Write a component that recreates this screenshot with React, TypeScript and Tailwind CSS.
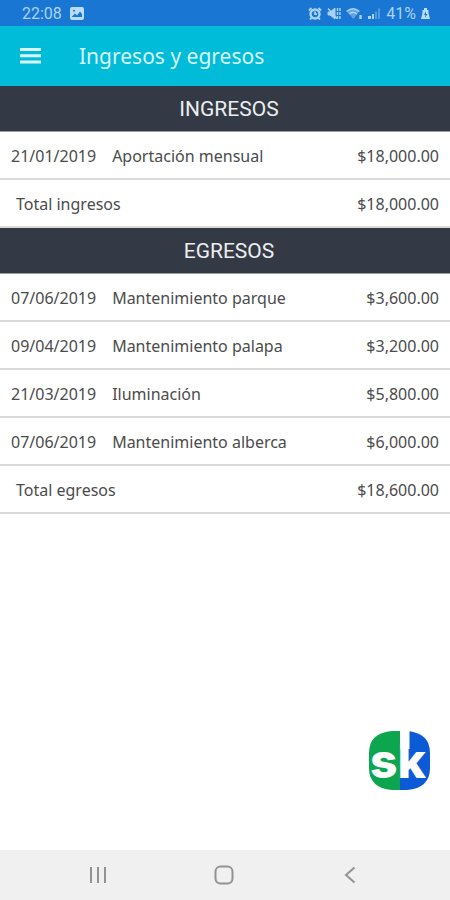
type Entry = {
  date: string;
  concept: string;
  amount: string;
};

type Section = {
  title: string;
  totalLabel: string;
  total: string;
  entries: Entry[];
};

const sections: Section[] = [
  {
    title: "INGRESOS",
    totalLabel: "Total ingresos",
    total: "$18,000.00",
    entries: [
      { date: "21/01/2019", concept: "Aportación mensual", amount: "$18,000.00" },
    ],
  },
  {
    title: "EGRESOS",
    totalLabel: "Total egresos",
    total: "$18,600.00",
    entries: [
      { date: "07/06/2019", concept: "Mantenimiento parque", amount: "$3,600.00" },
      { date: "09/04/2019", concept: "Mantenimiento palapa", amount: "$3,200.00" },
      { date: "21/03/2019", concept: "Iluminación", amount: "$5,800.00" },
      { date: "07/06/2019", concept: "Mantenimiento alberca", amount: "$6,000.00" },
    ],
  },
];

function StatusBar() {
  return (
    <div className="flex h-[26px] items-center justify-between bg-[#1976d2] pl-[22px] pr-5 pt-px font-['Roboto',sans-serif] text-[16px] text-[#a9d2f5]">
      <div className="flex items-center gap-2">
        <span>22:08</span>
        <svg width="14" height="13" viewBox="0 0 14 13">
          <rect width="14" height="13" rx="2" fill="#b9dcf8" />
          <path d="M2 9.500 5 6.500l2 2 3-4 2 2.500V10H2z" fill="#1976d2" />
          <circle cx="4" cy="3.700" r="1" fill="#1976d2" />
        </svg>
      </div>
      <div className="flex items-center gap-[5px]">
        {/* alarm */}
        <svg width="14" height="13" viewBox="0 0 14 13" fill="none" stroke="currentColor">
          <circle cx="7" cy="7" r="4.500" strokeWidth="2.400" />
          <path d="M7 4.500V7.200h2M1 3.500 3.500 1M13 3.500 10.500 1M3.500 11 2 12.500M10.500 11l1.500 1.500" strokeWidth="1.800" />
        </svg>
        {/* vibrate / muted */}
        <svg width="14" height="13" viewBox="0 0 14 13" fill="none" stroke="currentColor">
          <path d="M1 5h2l5-4v11L3 8H1z" fill="currentColor" />
          <path d="M1 1.500 10 11.500" strokeWidth="1.400" />
          <path d="M10.500 1v11M13 1v11" strokeWidth="1.400" strokeDasharray="3 1" />
        </svg>
        <svg width="17" height="13" viewBox="0 0 17 13" fill="none" stroke="currentColor">
          <path d="M1 4.500Q7-1 13 4.500L7.500 12z" fill="currentColor" stroke="none" opacity="0.5" />
          <path d="M.5 4.500Q7-1 13.500 4.500M3 7Q7 3.500 11 7" strokeWidth="1.400" />
          <path d="M14.500 8v4" strokeWidth="2.400" />
        </svg>
        <svg width="13" height="13" viewBox="0 0 13 13" fill="currentColor">
          <path d="M0 9h3v3H0zM4 7h2v5H4z" />
          <path d="M7 4.500h2V12H7zM10 1.500h2V12h-2z" opacity="0.4" />
        </svg>
        <span>41%</span>
        <svg width="9" height="13" viewBox="0 0 9 13">
          <path d="M3 1h3v2h1.500v3L9 12H0l1.500-6V3H3z" fill="#b9dcf8" />
          <path d="M5 4 3 8h1.500L4 11l2.500-4H5z" fill="#1976d2" />
        </svg>
      </div>
    </div>
  );
}

function LedgerSection({ section }: { section: Section }) {
  return (
    <section>
      <h2 className="flex h-[46px] items-center justify-center border-b border-[#9a9da1] bg-[#343a45] pl-2 pt-[3px] font-['Roboto',sans-serif] text-[21px] text-[#eceef0]">
        {section.title}
      </h2>
      <table className="w-full border-separate border-spacing-0 text-[16px] text-[#4b4b4b]">
        <tbody>
          {section.entries.map((entry) => (
            <tr key={entry.date + entry.concept} className="h-12">
              <td className="w-px whitespace-nowrap border-b-2 border-[#dadada] pl-[11px] pr-4 pt-[2px]">{entry.date}</td>
              <td className="border-b-2 border-[#dadada] pt-[2px]">{entry.concept}</td>
              <td className="border-b-2 border-[#dadada] pr-[11px] pt-[2px] text-right">{entry.amount}</td>
            </tr>
          ))}
        </tbody>
        <tfoot>
          <tr className="h-12">
            <td colSpan={2} className="border-b-2 border-[#dadada] pl-4 pt-[2px]">
              {section.totalLabel}
            </td>
            <td className="border-b-2 border-[#dadada] pr-[11px] pt-[2px] text-right">{section.total}</td>
          </tr>
        </tfoot>
      </table>
    </section>
  );
}

export default function App() {
  return (
    <div className="relative flex min-h-screen flex-col bg-white font-['Noto_Sans',sans-serif]">
      <StatusBar />

      <header className="flex h-[60px] items-center gap-[38px] bg-[#00bcd8] px-5 text-[#d9f7fb]">
        <button type="button" aria-label="Menú">
          <svg width="21" height="16" viewBox="0 0 21 16" fill="currentColor">
            <path d="M0 0h21v3H0zM0 6.200h21v3H0zM0 12.400h21v3H0z" />
          </svg>
        </button>
        <h1 className="pt-[2px] text-[21px]">Ingresos y egresos</h1>
      </header>

      <main className="flex-1">
        {sections.map((section) => (
          <LedgerSection key={section.title} section={section} />
        ))}
      </main>

      <button type="button" aria-label="Abrir sk" className="absolute bottom-[100px] right-5">
        <svg width="61" height="79" viewBox="0 -10 61 79">
          <path d="M31 0H23Q0 2 0 22v15q0 20 23 22h8z" fill="#0da64f" />
          <path d="M31 0h7q23 2 23 22v15q0 20-23 22h-7z" fill="#0b5bd7" />
          <text x="1" y="47" fill="#fff" className="font-['Inter',sans-serif] text-[48px] font-extrabold">
            sk
          </text>
          <path d="M31 0h9.500v18H31z" fill="#fff" />
        </svg>
      </button>

      <nav className="grid h-[50px] grid-cols-3 place-items-center bg-[#f0f0f0] pl-[35px] pr-[37px] text-[#929292]">
        <button type="button" aria-label="Recientes">
          <svg width="18" height="18" viewBox="0 0 18 18" stroke="currentColor" strokeWidth="2">
            <path d="M2 1v16M9 1v16M16 1v16" />
          </svg>
        </button>
        <button type="button" aria-label="Inicio">
          <svg width="20" height="20" viewBox="0 0 20 20" fill="none" stroke="currentColor" strokeWidth="2">
            <rect x="1.500" y="1.500" width="17" height="17" rx="5" />
          </svg>
        </button>
        <button type="button" aria-label="Atrás">
          <svg width="12" height="18" viewBox="0 0 12 18" fill="none" stroke="currentColor" strokeWidth="2">
            <path d="M10.500 1.500 2 9l8.500 7.500" />
          </svg>
        </button>
      </nav>
    </div>
  );
}
